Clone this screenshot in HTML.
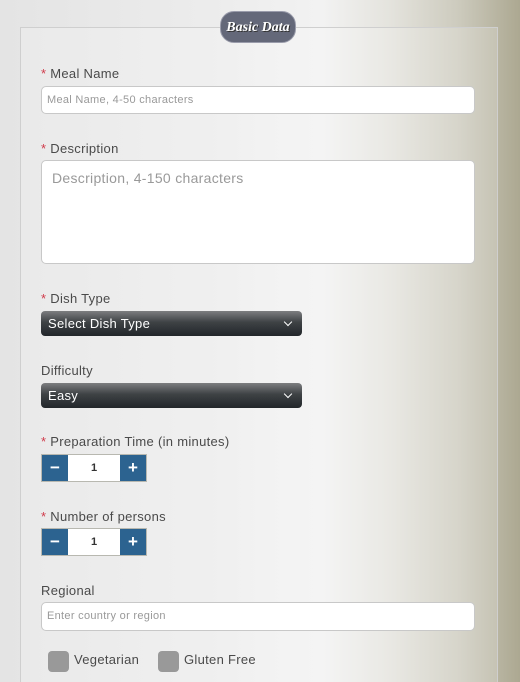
<!DOCTYPE html>
<html style="height:682px;overflow:hidden"><head><style>
body{margin:0;width:520px;height:682px;overflow:hidden;font-family:"Liberation Sans",sans-serif;
background:linear-gradient(90deg,#e4e4e4 0%,#ececec 40%,#f2f2f2 62%,#e4e3dd 75%,#cdcbbe 88%,#aca891 100%);position:relative}
.panel{position:absolute;left:20px;top:27px;width:476px;height:670px;border:1px solid #cfcfcf;border-bottom:none;background:rgba(255,255,255,0.2)}
.badge{position:absolute;left:220px;top:11px;width:76px;height:32px;border-radius:14px;background:#646879;border:1px solid #9a9cab;color:#fff;font-family:"Liberation Serif",serif;font-style:italic;font-weight:bold;font-size:14px;text-align:center;line-height:31px;text-shadow:1px 1px 0 #333;box-sizing:border-box}
.lbl{position:absolute;left:41px;font-size:13px;color:#4a4a4a;letter-spacing:0.3px}
.lbl b{color:#d03a4a;font-weight:normal}
.inp{position:absolute;left:41px;width:434px;background:#fff;border:1px solid #c8c8c8;border-radius:5px;box-sizing:border-box;color:#999;font-size:11px;padding-left:5px;letter-spacing:0.3px}
.sel{position:absolute;left:41px;width:261px;height:25px;border-radius:4px;background:linear-gradient(#7d7e80,#3e4245 45%,#22262a);color:#fff;font-size:13px;line-height:25px;padding-left:7px;box-sizing:border-box;letter-spacing:0.3px}
.sel:after{content:"";position:absolute;right:11px;top:8px;width:5px;height:5px;border-right:1.5px solid #fff;border-bottom:1.5px solid #fff;transform:rotate(45deg)}
.spin{position:absolute;left:41px;width:106px;height:28px;border:1px solid #b8b8b0;box-sizing:border-box;display:flex;background:#fff}
.spin span{width:26px;background:#2c6390;color:#fff;font-weight:bold;font-size:17px;text-align:center;line-height:25px}
.spin i{flex:1;text-align:center;font-style:normal;font-size:11px;font-weight:bold;line-height:26px;color:#333}
.cb{position:absolute;top:651px;width:21px;height:21px;border-radius:4px;background:#999}
</style></head><body>
<div class="panel"></div>
<div class="badge">Basic Data</div>
<div class="lbl" style="top:66px"><b>*</b> Meal Name</div>
<div class="inp" style="top:86px;height:28px;line-height:26px">Meal Name, 4-50 characters</div>
<div class="lbl" style="top:141px"><b>*</b> Description</div>
<div class="inp" style="top:160px;height:104px;font-size:14px;padding:9px 10px">Description, 4-150 characters</div>
<div class="lbl" style="top:291px"><b>*</b> Dish Type</div>
<div class="sel" style="top:311px">Select Dish Type</div>
<div class="lbl" style="top:363px">Difficulty</div>
<div class="sel" style="top:383px">Easy</div>
<div class="lbl" style="top:434px"><b>*</b> Preparation Time (in minutes)</div>
<div class="spin" style="top:454px"><span>−</span><i>1</i><span>+</span></div>
<div class="lbl" style="top:509px"><b>*</b> Number of persons</div>
<div class="spin" style="top:528px"><span>−</span><i>1</i><span>+</span></div>
<div class="lbl" style="top:583px">Regional</div>
<div class="inp" style="top:602px;height:29px;line-height:27px">Enter country or region</div>
<div class="cb" style="left:48px"></div>
<div class="lbl" style="top:652px;left:74px">Vegetarian</div>
<div class="cb" style="left:158px"></div>
<div class="lbl" style="top:652px;left:184px">Gluten Free</div>
</body></html>
